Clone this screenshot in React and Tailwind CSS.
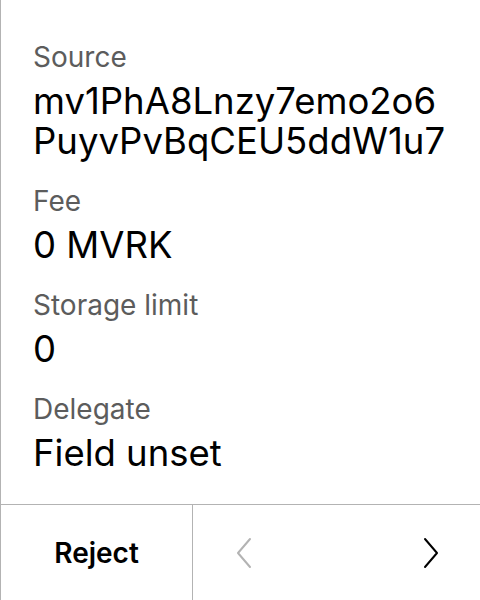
import React from 'react';

const fields = [
  { label: 'Source', lines: ['mv1PhA8Lnzy7emo2o6', 'PuyvPvBqCEU5ddW1u7'] },
  { label: 'Fee', lines: ['0 MVRK'] },
  { label: 'Storage limit', lines: ['0'] },
  { label: 'Delegate', lines: ['Field unset'] },
];

const Chevron = ({ dir, color }) => (
  <svg width="18" height="32" viewBox="0 0 18 32" fill="none">
    <path
      d={dir === 'left' ? 'M15 2 L3 16 L15 30' : 'M3 2 L15 16 L3 30'}
      stroke={color}
      strokeWidth="2"
      strokeLinecap="round"
      strokeLinejoin="round"
    />
  </svg>
);

export default function App() {
  return (
    <div className="w-[480px] h-[600px] bg-white flex flex-col border-l border-[#b3b3b3] font-['Inter',sans-serif]">
      <div className="flex-1 px-8 pt-[40px] flex flex-col gap-[23px]">
        {fields.map((f) => (
          <div key={f.label}>
            <div className="text-[28px] leading-[34px] text-[#5c5c5c]">{f.label}</div>
            <div className="mt-[7px] text-[36.5px] leading-[40px] text-black">
              {f.lines.map((l) => (
                <div key={l}>{l}</div>
              ))}
            </div>
          </div>
        ))}
      </div>
      <div className="h-[96px] border-t border-[#b3b3b3] flex">
        <button className="w-[191px] h-full flex items-center justify-center text-[28px] font-semibold text-black">
          Reject
        </button>
        <div className="flex-1 h-full border-l border-[#b3b3b3] flex items-center justify-between pl-[42px] pr-[40px]">
          <Chevron dir="left" color="#b3b3b3" />
          <Chevron dir="right" color="#000" />
        </div>
      </div>
    </div>
  );
}
